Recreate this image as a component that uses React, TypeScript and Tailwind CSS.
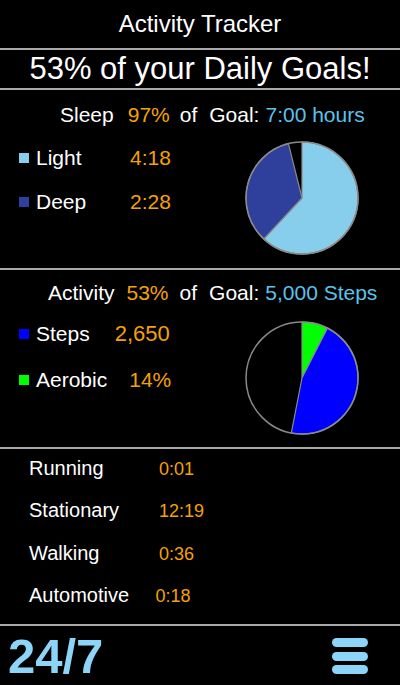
import React from "react";

type Slice = { from: number; to: number; color: string };

const pt = (c: number, r: number, deg: number) => {
  const a = (deg * Math.PI) / 180;
  return [c + r * Math.sin(a), c - r * Math.cos(a)];
};

function Pie({ slices }: { slices: Slice[] }) {
  const c = 58;
  const r = 56;
  return (
    <svg width="116" height="116" viewBox="0 0 116 116" className="block">
      <circle cx={c} cy={c} r={r} fill="#000" />
      {slices.map((s, i) => {
        const [x1, y1] = pt(c, r, s.from);
        const [x2, y2] = pt(c, r, s.to);
        const large = s.to - s.from > 180 ? 1 : 0;
        return (
          <path
            key={i}
            d={`M${c},${c} L${x1},${y1} A${r},${r} 0 ${large} 1 ${x2},${y2} Z`}
            fill={s.color}
            stroke="#8a8a8a"
            strokeWidth="1.2"
            strokeLinejoin="round"
          />
        );
      })}
      <circle cx={c} cy={c} r={r} fill="none" stroke="#8a8a8a" strokeWidth="1.5" />
    </svg>
  );
}

const Divider = () => <div className="h-[2px] bg-[#a9a9a9]" />;

const list = [
  { label: "Running", value: "0:01", cls: "ml-0" },
  { label: "Stationary", value: "12:19", cls: "ml-0" },
  { label: "Walking", value: "0:36", cls: "ml-0" },
  { label: "Automotive", value: "0:18", cls: "-ml-[3.5px]" },
];

export default function App() {
  return (
    <div className="w-[400px] h-[685px] bg-black text-white flex flex-col overflow-hidden font-['Liberation_Sans',Arial,sans-serif]">
      <div className="h-[48px] flex items-center justify-center text-[24px]">Activity Tracker</div>
      <Divider />
      <div className="h-[38px] flex items-center justify-center text-[31px]">53% of your Daily Goals!</div>
      <Divider />

      {/* sleep */}
      <div className="h-[178px] flex flex-col">
        <div className="mt-[13px] pl-[60px] flex text-[21px] leading-[24px] whitespace-nowrap">
          <span>Sleep</span>
          <span className="ml-[14px] text-[#f5a200]">97%</span>
          <span className="ml-[10px]">of</span>
          <span className="ml-[12px]">Goal:</span>
          <span className="ml-[6px] text-[#5bc2ec]">7:00 hours</span>
        </div>
        <div className="flex items-start">
          <div className="w-[244px] pl-[19px] pt-[19px] flex flex-col gap-[20px] text-[21px] leading-[24px]">
            <div className="flex items-center">
              <span className="w-[10px] h-[10px] bg-[#87ceec] mr-[7px]" />
              <span className="w-[94px]">Light</span>
              <span className="text-[#f5a200]">4:18</span>
            </div>
            <div className="flex items-center">
              <span className="w-[10px] h-[10px] bg-[#2f3f9c] mr-[7px]" />
              <span className="w-[94px]">Deep</span>
              <span className="text-[#f5a200]">2:28</span>
            </div>
          </div>
          <div className="mt-[13px]">
            <Pie
              slices={[
                { from: 0, to: 223, color: "#87ceec" },
                { from: 223, to: 346, color: "#2f3f9c" },
              ]}
            />
          </div>
        </div>
      </div>
      <Divider />

      {/* activity */}
      <div className="h-[177px] flex flex-col">
        <div className="mt-[11px] pl-[48px] flex text-[21px] leading-[24px] whitespace-nowrap">
          <span>Activity</span>
          <span className="ml-[12px] text-[#f5a200]">53%</span>
          <span className="ml-[11px]">of</span>
          <span className="ml-[12px]">Goal:</span>
          <span className="ml-[6px] text-[#5bc2ec]">5,000 Steps</span>
        </div>
        <div className="flex items-start">
          <div className="w-[244px] pl-[19px] pt-[17px] flex flex-col gap-[22px] text-[21px] leading-[24px]">
            <div className="flex items-center">
              <span className="w-[10px] h-[10px] bg-[#0000ff] mr-[7px]" />
              <span>Steps</span>
              <span className="ml-[25px] text-[22px] text-[#f5a200]">2,650</span>
            </div>
            <div className="flex items-center">
              <span className="w-[10px] h-[10px] bg-[#00ff00] mr-[7px]" />
              <span>Aerobic</span>
              <span className="ml-[22px] text-[#f5a200]">14%</span>
            </div>
          </div>
          <div className="mt-[15px]">
            <Pie
              slices={[
                { from: 0, to: 27, color: "#00ff00" },
                { from: 27, to: 191, color: "#0000ff" },
              ]}
            />
          </div>
        </div>
      </div>
      <Divider />

      {/* modes */}
      <div className="h-[175px] pt-[7px] pl-[29px] flex flex-col gap-[18.4px]">
        {list.map((row) => (
          <div key={row.label} className="h-[24px] flex items-baseline leading-[24px]">
            <span className="w-[130px] text-[20px]">{row.label}</span>
            <span className={`${row.cls} text-[18px] text-[#f5a200]`}>{row.value}</span>
          </div>
        ))}
      </div>
      <Divider />

      {/* footer */}
      <div className="flex-1 flex justify-between items-start pl-[8px] pr-[32px]">
        <div className="pt-[6px] text-[49px] leading-none font-bold text-[#8dd5f8]">24/7</div>
        <div className="pt-[12px] flex flex-col gap-[4.5px]">
          <span className="block w-[36px] h-[9px] rounded-full bg-[#8dd5f8]" />
          <span className="block w-[36px] h-[9px] rounded-full bg-[#8dd5f8]" />
          <span className="block w-[36px] h-[9px] rounded-full bg-[#8dd5f8]" />
        </div>
      </div>
    </div>
  );
}
